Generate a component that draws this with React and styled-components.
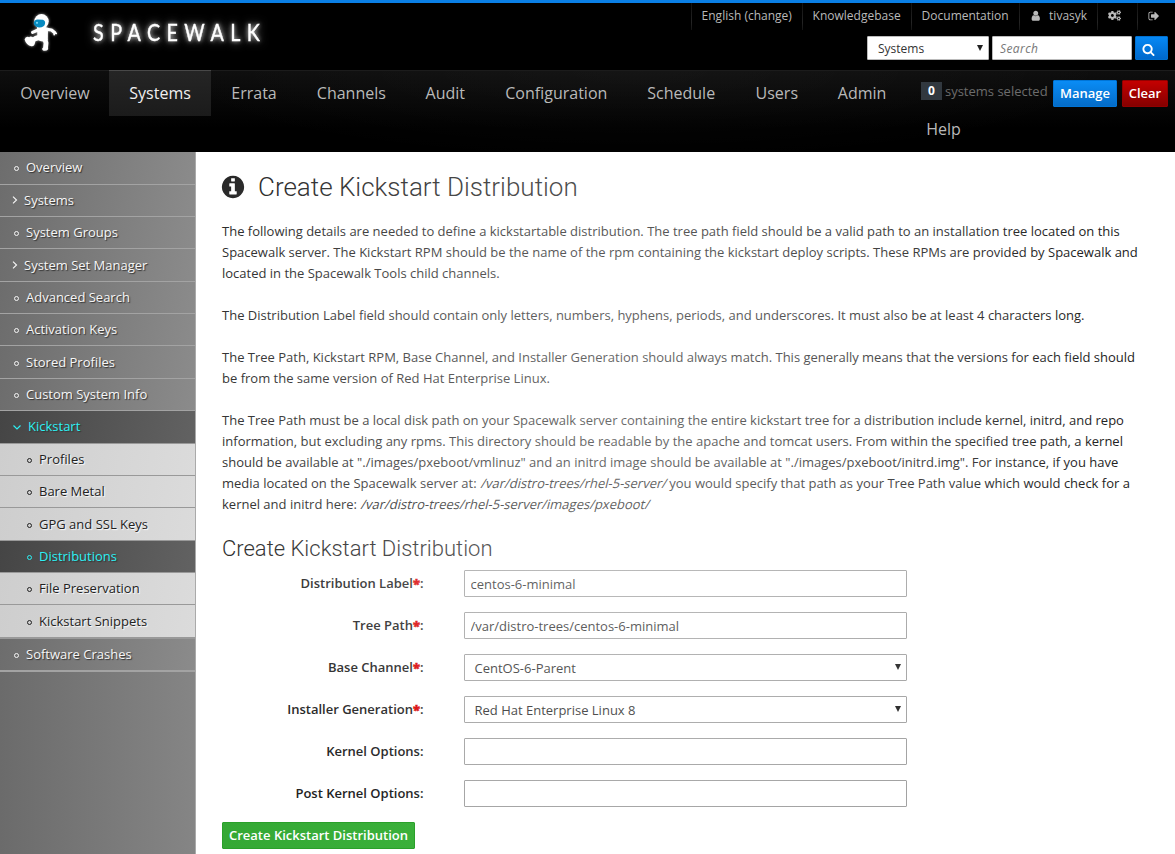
import React from "react";
import styled, { createGlobalStyle, css } from "styled-components";
import { FaCogs } from "react-icons/fa";

const Global = createGlobalStyle`
  *, *::before, *::after { box-sizing: border-box; }
  body { margin: 0; background: #fff; color: #222; font: 13px/21px "Open Sans", "Liberation Sans", sans-serif; overflow: hidden; }
  input, select, button { font: inherit; color: inherit; }
  a { color: inherit; text-decoration: none; }
`;

const Page = styled.div`
  display: flex;
  flex-direction: column;
  height: 854px;
`;

const Header = styled.header`
  display: flex;
  justify-content: space-between;
  height: 70px;
  flex: none;
  background: #000;
  border-top: 3px solid #0a7fe6;
`;

const Brand = styled.a`
  display: flex;
  align-items: flex-start;
  padding: 7px 0 0 20px;
`;

const Astronaut = styled.svg`
  width: 42px;
  height: 46px;
  filter: drop-shadow(0 0 1.5px rgba(255, 255, 255, 0.6));
`;

const Wordmark = styled.span`
  margin: 6px 0 0 31px;
  font: 400 24px/32px Lato, sans-serif;
  letter-spacing: 7.9px;
  color: #fff;
  -webkit-text-stroke: 0.4px #fff;
  text-shadow: 0 0 5px rgba(255, 255, 255, 0.8), 0 0 10px rgba(255, 255, 255, 0.75);
  transform: scaleX(0.82);
  transform-origin: left;
`;

const Tools = styled.div`
  display: flex;
  flex-direction: column;
  align-items: flex-end;
  width: 484px;
`;

const UtilityNav = styled.nav`
  display: flex;
  align-self: stretch;
  height: 33px;
`;

const UtilityItem = styled.a`
  display: flex;
  align-items: center;
  gap: 8px;
  width: ${(p) => p.$width}px;
  height: 27px;
  padding: 0 0 2px 9.6px;
  border-left: 1px solid;
  border-image: linear-gradient(#101010, #242424 70%, #111) 1;
  color: #b9b9b9;
  font-size: 12px;
  white-space: nowrap;
`;

const SearchForm = styled.form`
  display: flex;
  gap: 3px;
  padding-right: 7px;
`;

const control = css`
  border: 1px solid #bbb;
  border-radius: 1px;
  background: #fff;
`;

const SearchScope = styled.div`
  ${control}
  display: flex;
  align-items: center;
  justify-content: space-between;
  width: 122px;
  height: 24px;
  padding: 0 5px 0 10px;
  font-size: 12px;
  color: #333;
`;

const SearchInput = styled.input`
  ${control}
  width: 140px;
  height: 24px;
  padding: 0 7px;
  font-size: 12px;
  &::placeholder { color: #777; font-style: italic; letter-spacing: 0.4px; opacity: 1; }
`;

const SearchButton = styled.button`
  display: flex;
  align-items: center;
  width: 33px;
  height: 24px;
  padding: 2px 0 0 6px;
  border: 1px solid #0070d0;
  border-radius: 1px;
  background: linear-gradient(#0688f4, #0069cc);
  color: #fff;
`;

const Caret = styled.i`
  border: 3.5px solid transparent;
  border-top: 6px solid #222;
  border-bottom: 0;
`;

const MainNav = styled.nav`
  display: flex;
  height: 82px;
  flex: none;
  border-top: 1px solid #1c1c1c;
  background: radial-gradient(ellipse 480px 90px at 640px 0, rgba(255, 255, 255, 0.03), transparent),
    linear-gradient(#0e0e0e, #000 70%);
`;

const NavItem = styled.a`
  flex: none;
  height: 46px;
  margin-top: -1px;
  width: ${(p) => p.$width}px;
  padding-left: 20.3px;
  border-top: 1px solid ${(p) => (p.$active ? "#484848" : "transparent")};
  background: ${(p) => (p.$active ? "linear-gradient(#252525, #1b1b1b)" : "none")};
  color: ${(p) => (p.$active ? "#f0f0f0" : "#b9b9b9")};
  font-size: 16px;
  line-height: 45px;
  white-space: nowrap;
`;

const NavEnd = styled.div`
  display: flex;
  flex-direction: column;
  flex: 1;
`;

const Selection = styled.div`
  display: flex;
  align-items: flex-start;
  height: 36px;
  padding: 9px 0 0 15px;
  color: #6c6c6c;
`;

const Count = styled.span`
  width: 21px;
  height: 18px;
  margin: 2px 3px 0 0;
  background: #31383f;
  color: #fff;
  font-weight: 700;
  font-size: 12px;
  line-height: 18px;
  text-align: center;
`;

const SelectionText = styled.span`
  width: 108px;
  padding-top: 1px;
  white-space: nowrap;
`;

const Action = styled.button`
  flex: none;
  width: ${(p) => p.$width}px;
  height: 27px;
  margin-right: 5px;
  padding: 0;
  border: 1px solid ${(p) => (p.$danger ? "#920000" : "#0074d6")};
  border-radius: 1px;
  background: ${(p) => (p.$danger ? "linear-gradient(#c40000, #850000)" : "linear-gradient(#0a8cf5, #046cc8)")};
  color: #fff;
  font-weight: 600;
`;

const Body = styled.div`
  display: flex;
  flex: 1;
  min-height: 0;
`;

const Sidebar = styled.aside`
  width: 196px;
  flex: none;
  padding-top: 0.2px;
  border-right: 1px solid #aaa;
  background: linear-gradient(90deg, #6b6b6b, #858585);
`;

const sideTones = {
  plain: css`
    background: linear-gradient(100deg, #6d6d6d, #8b8b8b);
    border-color: #a3a3a3;
    color: #f6f6f6;
    text-shadow: 1px 1px 1px #333;
  `,
  sub: css`
    background: linear-gradient(100deg, #cecece, #dbdbdb);
    border-color: #999;
    color: #222;
    text-shadow: 1px 1px 1px #fff;
  `,
  active: css`
    background: linear-gradient(100deg, #454545, #626262);
    border-color: #999;
    color: #2cf0f4;
    text-shadow: 1px 1px 1px #333;
  `,
};

const SideItem = styled.a`
  display: flex;
  align-items: center;
  gap: ${(p) => (p.$chevron ? 6 : 6.5)}px;
  height: ${(p) => (p.$last ? 33.4 : 32.39)}px;
  padding-left: ${(p) => (p.$nested ? 25.5 : 12.5)}px;
  border-bottom: ${(p) => (p.$last ? 2 : 1)}px solid;
  white-space: nowrap;
  ${(p) => sideTones[p.$tone]}
`;

const Bullet = styled.i`
  width: 5px;
  height: 5px;
  margin: 2px 1px 0;
  border: 1px solid currentColor;
  border-radius: 50%;
`;

const Chevron = styled.svg`
  width: ${(p) => (p.$open ? 10 : 6)}px;
  height: 8px;
  margin-left: -0.5px;
  fill: none;
  stroke: currentColor;
  stroke-width: 1.15;
`;

const Content = styled.main`
  position: relative;
  flex: 1;
  padding: 20px 26px 0;
  overflow: hidden;
  &::after {
    content: "";
    position: absolute;
    inset: 0;
    pointer-events: none;
    background: radial-gradient(ellipse 500px 460px at 420px 260px, rgba(255, 255, 255, 0.34), rgba(255, 255, 255, 0.24) 40%, transparent);
  }
`;

const Title = styled.h1`
  display: flex;
  align-items: center;
  gap: 12px;
  height: 30px;
  margin: 0 0 19px -2px;
  font: 300 26px/30px Roboto, sans-serif;
`;

const Paragraph = styled.p`
  margin: 0 0 21px;
  white-space: nowrap;
`;

const Path = styled.em`
  display: inline-block;
  font-style: normal;
  transform: skewX(-14deg);
  transform-origin: 50% 76%;
`;

const Subtitle = styled.h2`
  margin: 0 0 8px;
  font: 300 22px/26px Roboto, sans-serif;
`;

const Field = styled.div`
  display: flex;
  justify-content: flex-start;
  height: 27px;
  margin-bottom: 15px;
`;

const Label = styled.label`
  width: 201.5px;
  margin-right: 40.5px;
  font-weight: 600;
  line-height: 26px;
  text-align: right;
  b { color: #d80000; font-weight: 800; -webkit-text-stroke: 0.5px #d80000; }
`;

const TextInput = styled.input`
  width: 443px;
  padding: 2px 6px 0 5.5px;
  border: 1px solid #a2a2a2;
  border-radius: 1px;
  background: #fff;
  color: #333;
`;

const SelectBox = styled.div`
  display: flex;
  justify-content: space-between;
  width: 443px;
  padding: 3px 5px 0 9.5px;
  border: 1px solid #a2a2a2;
  border-radius: 1px;
  color: #333;
  ${Caret} { margin-top: 6px; }
`;

const Submit = styled.button`
  width: 193px;
  height: 27px;
  padding: 0;
  border: 1px solid #2aa02a;
  border-radius: 1px;
  background: linear-gradient(90deg, #34a834, #3ab03a);
  color: #fff;
  font-weight: 600;
  white-space: nowrap;
`;

const ICONS = {
  info: "M1152 1376v-160q0-14-9-23t-23-9h-96v-512q0-14-9-23t-23-9h-320q-14 0-23 9t-9 23v160q0 14 9 23t23 9h96v320h-96q-14 0-23 9t-9 23v160q0 14 9 23t23 9h448q14 0 23-9t9-23zm-128-896v-160q0-14-9-23t-23-9h-192q-14 0-23 9t-9 23v160q0 14 9 23t23 9h192q14 0 23-9t9-23zm640 416q0 209-103 385.5t-279.5 279.5-385.5 103-385.5-103-279.5-279.5-103-385.5 103-385.5 279.5-279.5 385.5-103 385.5 103 279.5 279.5 103 385.5z",
  search: "M1216 832q0-185-131.5-316.5t-316.5-131.5-316.5 131.5-131.5 316.5 131.5 316.5 316.5 131.5 316.5-131.5 131.5-316.5zm512 832q0 52-38 90t-90 38q-54 0-90-38l-343-342q-179 124-399 124-143 0-273.5-55.5t-225-150-150-225-55.5-273.5 55.5-273.5 150-225 225-150 273.5-55.5 273.5 55.5 225 150 150 225 55.5 273.5q0 220-124 399l343 343q37 37 37 90z",
  user: "M1536 1399q0 109-62.5 187t-150.5 78h-854q-88 0-150.5-78t-62.5-187q0-85 8.5-160.5t31.5-152 58.5-131 94-89 134.5-34.5q131 128 313 128t313-128q76 0 134.5 34.5t94 89 58.5 131 31.5 152 8.5 160.5zm-256-887q0 159-112.5 271.5t-271.5 112.5-271.5-112.5-112.5-271.5 112.5-271.5 271.5-112.5 271.5 112.5 112.5 271.5z",
  signOut: "M704 1440q0 4 1 20t.5 26.5-3 23.5-10 19.5-20.5 6.5h-320q-119 0-203.5-84.5t-84.5-203.5v-704q0-119 84.5-203.5t203.5-84.5h320q13 0 22.5 9.5t9.5 22.5q0 4 1 20t.5 26.5-3 23.5-10 19.5-20.5 6.5h-320q-66 0-113 47t-47 113v704q0 66 47 113t113 47h312l11.5 1 11.5 3 8 5.5 7 9 2 13.5zm928-544q0 26-19 45l-544 544q-19 19-45 19t-45-19-19-45v-288h-448q-26 0-45-19t-19-45v-384q0-26 19-45t45-19h448v-288q0-26 19-45t45-19 45 19l544 544q19 19 19 45z",
};

const Icon = ({ name, size }) => (
  <svg width={size} height={size} viewBox="0 0 1792 1792" fill="currentColor" aria-hidden="true">
    <path d={ICONS[name]} />
  </svg>
);

const Logo = () => (
  <Astronaut viewBox="0 0 42 46" aria-hidden="true">
    <g fill="none" stroke="#fff" strokeLinecap="round" strokeLinejoin="round">
      <path d="M18 20 L12.6 22.4" strokeWidth="3.2" />
      <path d="M27 19.3 L31.5 20 L34.5 22.5" strokeWidth="3.2" />
      <path d="M34.8 22.5 L34.2 24.6 M35 22.5 L36.2 23.4" strokeWidth="1.8" />
      <path d="M20.5 27 L15.5 28.5 L12.5 30.5" strokeWidth="5" />
      <path d="M24.5 28 L26 33 L25.6 37" strokeWidth="4.8" />
    </g>
    <path fill="#fff" d="M17 17 Q23 15 28 18 L27.8 30 Q22 33 17.5 29.5 Z" />
    <path fill="#fff" d="M4.6 29.6 Q5.6 25.8 9.2 27.2 Q11 25.4 14 28 L15.2 32 Q14.6 36.6 11.4 36.2 Q6.2 35.4 4.6 29.6 Z" />
    <path fill="#fff" d="M22.2 38.4 Q24 35.4 27.8 36.4 Q29.2 40.8 24.8 40.8 Q22 40.8 22.2 38.4Z" />
    <circle cx="21.5" cy="11.3" r="7.2" fill="#fff" />
    <path fill="#078ac0" d="M13.8 13 Q14.2 9.8 17.6 9.6 L23 9.8 Q25.6 10.8 25 14 Q24 17.6 19 17.4 Q14 17 13.8 13Z" />
    <circle cx="17" cy="12.8" r="1.1" fill="#7bd8f5" />
  </Astronaut>
);

const NAV = [
  ["Overview", 109], ["Systems", 102, true], ["Errata", 85.5], ["Channels", 108.8], ["Audit", 79.7],
  ["Configuration", 142], ["Schedule", 108.3], ["Users", 82.2], ["Admin", 88.5],
];

const SIDE = [
  { text: "Overview" }, { text: "Systems", icon: "right" }, { text: "System Groups" },
  { text: "System Set Manager", icon: "right" }, { text: "Advanced Search" }, { text: "Activation Keys" },
  { text: "Stored Profiles" }, { text: "Custom System Info" },
  { text: "Kickstart", icon: "down", tone: "active" },
  { text: "Profiles", nested: true, tone: "sub" }, { text: "Bare Metal", nested: true, tone: "sub" },
  { text: "GPG and SSL Keys", nested: true, tone: "sub" }, { text: "Distributions", nested: true, tone: "active" },
  { text: "File Preservation", nested: true, tone: "sub" },
  { text: "Kickstart Snippets", nested: true, tone: "sub", last: true },
  { text: "Software Crashes", last: true },
];

const FIELDS = [
  { label: "Distribution Label", required: true, value: "centos-6-minimal" },
  { label: "Tree Path", required: true, value: "/var/distro-trees/centos-6-minimal" },
  { label: "Base Channel", required: true, value: "CentOS-6-Parent", select: true },
  { label: "Installer Generation", required: true, value: "Red Hat Enterprise Linux 8", select: true },
  { label: "Kernel Options", value: "" },
  { label: "Post Kernel Options", value: "" },
];

export default function App() {
  return (
    <Page>
      <Global />
      <Header>
        <Brand href="#">
          <Logo />
          <Wordmark>SPACEWALK</Wordmark>
        </Brand>
        <Tools>
          <UtilityNav>
            <UtilityItem $width={111}>English (change)</UtilityItem>
            <UtilityItem $width={109}>Knowledgebase</UtilityItem>
            <UtilityItem $width={108}>Documentation</UtilityItem>
            <UtilityItem $width={78}><Icon name="user" size={11.5} />tivasyk</UtilityItem>
            <UtilityItem $width={40}><FaCogs size={13} /></UtilityItem>
            <UtilityItem $width={38}><Icon name="signOut" size={12} /></UtilityItem>
          </UtilityNav>
          <SearchForm>
            <SearchScope>Systems<Caret /></SearchScope>
            <SearchInput placeholder="Search" />
            <SearchButton type="button" aria-label="Search"><Icon name="search" size={13} /></SearchButton>
          </SearchForm>
        </Tools>
      </Header>
      <MainNav>
        {NAV.map(([text, width, active]) => (
          <NavItem key={text} $width={width} $active={active}>{text}</NavItem>
        ))}
        <NavEnd>
          <Selection>
            <Count>0</Count>
            <SelectionText>systems selected</SelectionText>
            <Action $width={64}>Manage</Action>
            <Action $width={46} $danger>Clear</Action>
          </Selection>
          <NavItem $width={75}>Help</NavItem>
        </NavEnd>
      </MainNav>
      <Body>
        <Sidebar>
          {SIDE.map(({ text, icon, tone = "plain", nested, last }) => (
            <SideItem key={text} $tone={tone} $nested={nested} $last={last} $chevron={!!icon}>
              {icon ? (
                <Chevron $open={icon === "down"} viewBox={icon === "down" ? "0 0 10 8" : "0 0 6 8"}>
                  <path d={icon === "down" ? "M1.5 2.5 L5 6 L8.5 2.5" : "M1 0.7 L4.5 4 L1 7.3"} />
                </Chevron>
              ) : <Bullet />}
              {text}
            </SideItem>
          ))}
        </Sidebar>
        <Content>
          <Title><Icon name="info" size={26} />Create Kickstart Distribution</Title>
          <Paragraph>
            The following details are needed to define a kickstartable distribution. The tree path field should be a valid path to an installation tree located on this<br />
            Spacewalk server. The Kickstart RPM should be the name of the rpm containing the kickstart deploy scripts. These RPMs are provided by Spacewalk and<br />
            located in the Spacewalk Tools child channels.
          </Paragraph>
          <Paragraph>
            The Distribution Label field should contain only letters, numbers, hyphens, periods, and underscores. It must also be at least 4 characters long.
          </Paragraph>
          <Paragraph>
            The Tree Path, Kickstart RPM, Base Channel, and Installer Generation should always match. This generally means that the versions for each field should<br />
            be from the same version of Red Hat Enterprise Linux.
          </Paragraph>
          <Paragraph>
            The Tree Path must be a local disk path on your Spacewalk server containing the entire kickstart tree for a distribution include kernel, initrd, and repo<br />
            information, but excluding any rpms. This directory should be readable by the apache and tomcat users. From within the specified tree path, a kernel<br />
            should be available at "./images/pxeboot/vmlinuz" and an initrd image should be available at "./images/pxeboot/initrd.img". For instance, if you have<br />
            media located on the Spacewalk server at: <Path>/var/distro-trees/rhel-5-server/</Path> you would specify that path as your Tree Path value which would check for a<br />
            kernel and initrd here: <Path>/var/distro-trees/rhel-5-server/images/pxeboot/</Path>
          </Paragraph>
          <Subtitle>Create Kickstart Distribution</Subtitle>
          {FIELDS.map(({ label, required, value, select }) => (
            <Field key={label}>
              <Label>{label}{required && <b>*</b>}:</Label>
              {select ? <SelectBox>{value}<Caret /></SelectBox> : <TextInput defaultValue={value} />}
            </Field>
          ))}
          <Submit type="button">Create Kickstart Distribution</Submit>
        </Content>
      </Body>
    </Page>
  );
}
